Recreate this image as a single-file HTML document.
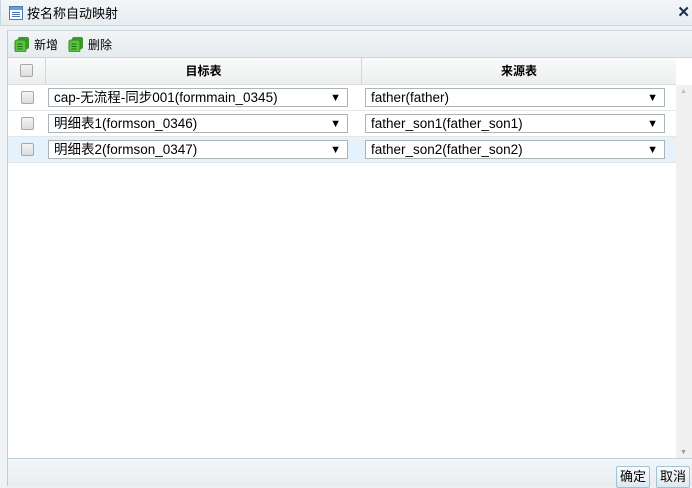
<!DOCTYPE html>
<html><head><meta charset="utf-8"><style>
*{margin:0;padding:0;box-sizing:border-box}
body{width:692px;height:486px;overflow:hidden;background:#eef2f4;font-family:"Liberation Sans","Noto Sans CJK SC",sans-serif;font-size:13px;color:#000;position:relative}
.title{position:absolute;left:0;top:0;width:692px;height:26px;background:linear-gradient(#f3f6f8,#e6ecef);border-bottom:1px solid #c5d6dc;border-left:1px solid #c5d6dc}
.title span{position:absolute;left:26px;top:3px;font-size:13px}
.x{position:absolute;right:2px;top:3px;font-weight:bold;font-size:15px;color:#1a2a50}
.panel{position:absolute;left:7px;top:30px;width:685px;height:456px;border-left:1px solid #b7d0da;border-top:1px solid #c5d6dc;background:#fff}
.tb{position:absolute;left:0;top:0;width:685px;height:27px;background:linear-gradient(#f2f5f7,#e5ebee);border-bottom:1px solid #c8d5db}
.btn{position:absolute;top:5px;font-size:12px}
.ic{position:absolute;top:6px;width:16px;height:15px}
.hd{position:absolute;top:27px;left:0;width:668px;height:27px;background:linear-gradient(#fafbfb,#eceeef);border-bottom:1px solid #dcdcdc;font-weight:bold;font-size:12px}
.hd div{position:absolute;top:0;height:26px;line-height:26px;text-align:center;border-right:1px solid #d6d6d6}
.row{position:absolute;left:0;width:668px;height:26px;border-bottom:1px solid #e6e6e6}
.cb{position:absolute;left:13px;width:13px;height:13px;border:1px solid #a8a8a8;border-radius:2px;background:linear-gradient(#f4f4f4,#dcdcdc)}
.sel{position:absolute;top:3px;height:19px;border:1px solid #a9b4bb;background:#fff;font-size:13.5px;line-height:18px;padding-left:5px}
.sel b{position:absolute;right:6px;top:0;font-size:11px}
.sb{position:absolute;left:668px;top:54px;width:17px;height:374px;background:#f0f0f0}
.foot{position:absolute;left:0;top:427px;width:685px;height:29px;border-top:1px solid #b9d3dc;background:linear-gradient(#f3f6f8,#e8edf0)}
.fb{position:absolute;top:7px;height:22px;border:1px solid #9fc3d3;border-radius:2px;background:linear-gradient(#fafcfd,#dfe8ee);font-size:13px;line-height:20px;padding:0 3px}
</style></head><body>
<div class="title">
<svg style="position:absolute;left:8px;top:6px" width="14" height="14"><rect x="0.5" y="0.5" width="13" height="13" fill="#fff" stroke="#4a78b8"/><rect x="1" y="1" width="12" height="3" fill="#6d9bd8"/><path d="M3 6.5h8M3 8.5h8M3 10.5h8" stroke="#4a78b8"/></svg>
<span>按名称自动映射</span><div class="x">✕</div></div>
<div class="panel">
<div class="tb">
<svg class="ic" style="left:6px" viewBox="0 0 16 15"><rect x="4" y="0" width="11" height="12" rx="2" fill="#3a9a2a"/><rect x="1" y="3" width="11" height="12" rx="2" fill="#5cc040" stroke="#2f8a22"/><path d="M3.5 7h5M3.5 9.5h5M3.5 12h5" stroke="#1f6e18"/></svg>
<span class="btn" style="left:26px">新增</span>
<svg class="ic" style="left:60px" viewBox="0 0 16 15"><rect x="4" y="0" width="11" height="12" rx="2" fill="#3a9a2a"/><rect x="1" y="3" width="11" height="12" rx="2" fill="#5cc040" stroke="#2f8a22"/><path d="M3.5 7h5M3.5 9.5h5M3.5 12h5" stroke="#1f6e18"/></svg>
<span class="btn" style="left:80px">删除</span>
</div>
<div class="hd"><div style="left:0;width:38px"><span class="cb" style="top:6px;left:12px"></span></div><div style="left:38px;width:316px">目标表</div><div style="left:354px;width:314px;border-right:none">来源表</div></div>
<div class="row" style="top:54px"><span class="cb" style="top:6px"></span><div class="sel" style="left:40px;width:300px">cap-无流程-同步001(formmain_0345)<b>▼</b></div><div class="sel" style="left:357px;width:300px">father(father)<b>▼</b></div></div>
<div class="row" style="top:80px"><span class="cb" style="top:6px"></span><div class="sel" style="left:40px;width:300px">明细表1(formson_0346)<b>▼</b></div><div class="sel" style="left:357px;width:300px">father_son1(father_son1)<b>▼</b></div></div>
<div class="row" style="top:106px;background:#e6f2fb"><span class="cb" style="top:6px"></span><div class="sel" style="left:40px;width:300px">明细表2(formson_0347)<b>▼</b></div><div class="sel" style="left:357px;width:300px">father_son2(father_son2)<b>▼</b></div></div>
<div class="sb"><span style="position:absolute;left:4px;top:3px;font-size:7px;color:#bbb">▲</span><span style="position:absolute;left:4px;bottom:3px;font-size:7px;color:#999">▼</span></div>
<div class="foot"><div class="fb" style="left:608px">确定</div><div class="fb" style="left:648px">取消</div></div>
</div>
</body></html>
